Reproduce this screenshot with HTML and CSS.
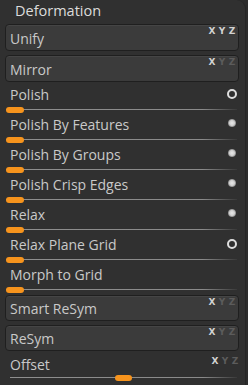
FILE: index.html
```html
<!DOCTYPE html>
<html>
<head>
<meta charset="utf-8">
<link rel="stylesheet" href="styles.css">
</head>
<body>
<div class="panel">
  <div class="title">Deformation</div>
  <div class="btn"><span class="label">Unify</span><span class="xyz"><b class="on">X</b><b class="on">Y</b><b class="on">Z</b></span></div>
  <div class="btn"><span class="label">Mirror</span><span class="xyz"><b class="on">X</b><b>Y</b><b>Z</b></span></div>
  <div class="slider"><div class="slabel">Polish</div><div class="track"><div class="thumb"></div></div><span class="ring"></span></div>
  <div class="slider"><div class="slabel">Polish By Features</div><div class="track"><div class="thumb"></div></div><span class="dot"></span></div>
  <div class="slider"><div class="slabel">Polish By Groups</div><div class="track"><div class="thumb"></div></div><span class="dot"></span></div>
  <div class="slider"><div class="slabel">Polish Crisp Edges</div><div class="track"><div class="thumb"></div></div><span class="dot"></span></div>
  <div class="slider"><div class="slabel">Relax</div><div class="track"><div class="thumb"></div></div><span class="dot"></span></div>
  <div class="slider"><div class="slabel">Relax Plane Grid</div><div class="track"><div class="thumb"></div></div><span class="ring"></span></div>
  <div class="slider"><div class="slabel">Morph to Grid</div><div class="track"><div class="thumb"></div></div></div>
  <div class="btn btn2"><span class="label">Smart ReSym</span><span class="xyz"><b class="on">X</b><b>Y</b><b>Z</b></span></div>
  <div class="btn btn3"><span class="label">ReSym</span><span class="xyz"><b class="on">X</b><b>Y</b><b>Z</b></span></div>
  <div class="slider offset"><div class="slabel">Offset</div><div class="track center"><div class="thumb"></div></div><span class="xyz flat"><b class="on">X</b><b>Y</b><b>Z</b></span></div>
</div>
</body>
</html>
```
FILE: styles.css
```css
html, body { margin: 0; padding: 0; background: #2c2c2c; }
body { width: 248px; height: 385px; overflow: hidden; font-family: "Open Sans", "DejaVu Sans", sans-serif; color: #c9c9c9; }
.panel {
  position: relative;
  height: 385px;
  background: #303030;
  border-top-right-radius: 9px;
  border-right: 1px solid #262626;
  margin-right: 2px;
  display: flex;
  flex-direction: column;
}
.title { height: 24px; line-height: 22px; padding-left: 15px; font-size: 14.5px; color: #dcdcdc; flex: none; }
.btn {
  position: relative;
  margin: 0 6px 4px 5px;
  height: 25px;
  flex: none;
  background: #3b3b3b;
  border: 1px solid #1f1f1f;
  border-radius: 4px;
  box-shadow: inset 0 1px 0 #454545;
  display: flex;
  align-items: center;
}
.btn + .btn { margin-bottom: 2px; }
.label { padding-left: 4px; font-size: 14px; color: #c9c9c9; padding-top: 1px; }
.xyz { position: absolute; right: 2px; top: 2px; display: flex; gap: 2px; }
.xyz b { font-family: "DejaVu Sans", sans-serif; font-weight: bold; font-size: 9px; line-height: 8px; color: #5c5c5c; width: 8px; text-align: center; }
.xyz b.on { color: #d2d2d2; }
.slider { position: relative; height: 30px; flex: none; display: flex; flex-direction: column; }
.slabel { padding-left: 10px; font-size: 14px; line-height: 16px; padding-top: 3px; height: 16px; color: #c9c9c9; }
.track {
  position: relative;
  margin: 4px 0 0 6px;
  width: 231px;
  height: 6px;
}
.track::before {
  content: "";
  position: absolute;
  left: 0; right: 0; top: 2px;
  height: 1px;
  background: linear-gradient(to right, #8e8e8e 0%, #8a8a8a 85%, #3a3a3a 100%);
}
.thumb {
  position: absolute;
  left: 0; top: 0;
  width: 18px; height: 6px;
  border-radius: 3px;
  background: #f7941d;
}
.track.center .thumb { left: 109px; width: 17px; }
.track.center::before { left: 4px; }
.ring {
  position: absolute;
  right: 8px; top: 5px;
  width: 6px; height: 6px;
  border: 2px solid #dedede;
  border-radius: 50%;
}
.dot {
  position: absolute;
  right: 9px; top: 5px;
  width: 8px; height: 8px;
  border-radius: 50%;
  background: radial-gradient(circle, #e8e8e8 0%, #cfcfcf 45%, #777 75%, rgba(80,80,80,0) 100%);
}
.offset .slabel { padding-top: 4px; }
.offset .track { margin-top: 2px; }
.offset .xyz.flat { right: 6px; top: 4px; }
.btn2 { margin-top: 1px; height: 24px; margin-bottom: 4px; }
.btn3 { height: 24px; margin-bottom: 2px; }
```
